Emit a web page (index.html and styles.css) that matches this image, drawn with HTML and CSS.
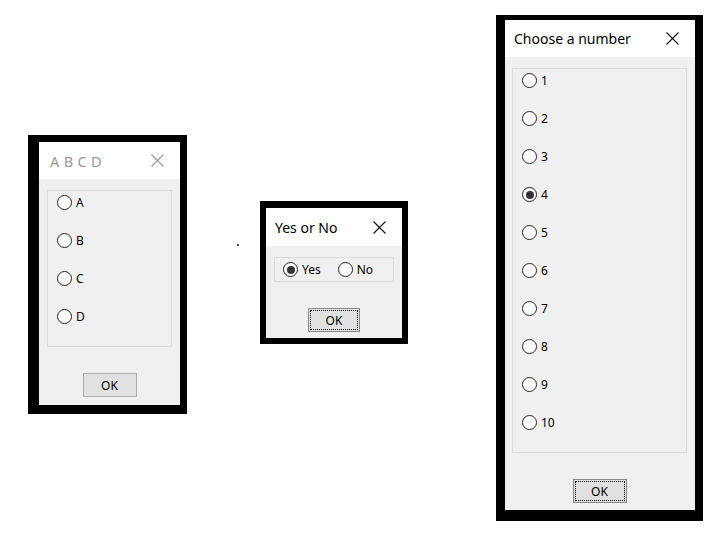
FILE: index.html
```html
<!DOCTYPE html>
<html>
<head>
  <meta charset="utf-8"/>
  <title>Radio Dialogs</title>
  <link rel="stylesheet" href="styles.css">
</head>
<body>
  <div class="desktop">

    <!-- inactive dialog -->
    <div class="frame frame-abcd">
      <div class="dialog">
        <div class="titlebar inactive">
          <span class="title spaced">A B C D</span>
          <svg class="close" width="13" height="13" viewBox="0 0 13 13"><path d="M0.5 0.5L12.5 12.5M12.5 0.5L0.5 12.5"/></svg>
        </div>
        <div class="body">
          <div class="group group-abcd">
            <div class="options">
              <label class="option"><span class="radio"></span>A</label>
              <label class="option"><span class="radio"></span>B</label>
              <label class="option"><span class="radio"></span>C</label>
              <label class="option"><span class="radio"></span>D</label>
            </div>
          </div>
          <div class="footer">
            <button class="ok">OK</button>
          </div>
        </div>
      </div>
    </div>

    <span class="speck"></span>

    <div class="frame frame-yesno">
      <div class="dialog">
        <div class="titlebar">
          <span class="title">Yes or No</span>
          <svg class="close" width="13" height="13" viewBox="0 0 13 13"><path d="M0.5 0.5L12.5 12.5M12.5 0.5L0.5 12.5"/></svg>
        </div>
        <div class="body">
          <div class="group group-yesno">
            <label class="option"><span class="radio checked"></span>Yes</label>
            <label class="option"><span class="radio"></span>No</label>
          </div>
          <div class="footer footer-yesno">
            <button class="ok focused">OK</button>
          </div>
        </div>
      </div>
    </div>

    <div class="frame frame-number">
      <div class="dialog">
        <div class="titlebar">
          <span class="title">Choose a number</span>
          <svg class="close" width="13" height="13" viewBox="0 0 13 13"><path d="M0.5 0.5L12.5 12.5M12.5 0.5L0.5 12.5"/></svg>
        </div>
        <div class="body">
          <div class="group group-number">
            <div class="options">
              <label class="option"><span class="radio"></span>1</label>
              <label class="option"><span class="radio"></span>2</label>
              <label class="option"><span class="radio"></span>3</label>
              <label class="option"><span class="radio checked"></span>4</label>
              <label class="option"><span class="radio"></span>5</label>
              <label class="option"><span class="radio"></span>6</label>
              <label class="option"><span class="radio"></span>7</label>
              <label class="option"><span class="radio"></span>8</label>
              <label class="option"><span class="radio"></span>9</label>
              <label class="option"><span class="radio"></span>10</label>
            </div>
          </div>
          <div class="footer footer-number">
            <button class="ok focused">OK</button>
          </div>
        </div>
      </div>
    </div>

  </div>
</body>
</html>
```

FILE: styles.css
```css
body {
  margin: 0;
  background: #fff;
  font-family: "Noto Sans", "Open Sans", sans-serif;
  color: #000;
}
.desktop {
  position: relative;
  width: 715px;
  height: 539px;
  overflow: hidden;
}

/* black outline around each window */
.frame {
  position: absolute;
  background: #000;
}
.frame-abcd {
  left: 28px;
  top: 135px;
  padding: 7px 7px 9px 11px;
}
.frame-yesno {
  left: 260px;
  top: 201px;
  padding: 7px 6px 6px 6px;
}
.frame-number {
  left: 496px;
  top: 15px;
  padding: 5px 8px 11px 9px;
}

.dialog {
  display: flex;
  flex-direction: column;
  background: #f0f0f0;
}
.frame-abcd .dialog { width: 141px; height: 263px; }
.frame-yesno .dialog { width: 136px; height: 130px; }
.frame-number .dialog { width: 190px; height: 490px; }

.titlebar {
  display: flex;
  align-items: center;
  justify-content: space-between;
  height: 37px;
  padding: 0 16px 0 9px;
  background: #fff;
  flex-shrink: 0;
}
.frame-yesno .titlebar { height: 38px; }
.title {
  font-size: 14px;
  color: #000;
}
.title.spaced {
  padding-left: 2px;
  font-size: 14.5px;
  letter-spacing: 0.3px;
}
.close path {
  fill: none;
  stroke: #111;
  stroke-width: 1.1;
}
.inactive .title { color: #999; }
.inactive .close path { stroke: #999; }

.body {
  flex: 1;
  display: flex;
  flex-direction: column;
  padding: 11px 8px 0 8px;
}
.frame-number .body { padding-left: 7px; padding-right: 8px; }

.group {
  border: 1px solid #dcdcdc;
  box-sizing: border-box;
}
.group-abcd { height: 157px; }
.group-number { height: 385px; }
.group-yesno {
  height: 25px;
  display: flex;
  align-items: center;
  gap: 17px;
  padding-left: 8px;
}

.options {
  display: flex;
  flex-direction: column;
  gap: 23px;
  padding: 4px 0 0 9px;
}

.option {
  display: flex;
  align-items: center;
  gap: 4px;
  height: 15px;
  font-size: 12px;
  line-height: 15px;
}

.radio {
  position: relative;
  width: 15px;
  height: 15px;
  border: 1px solid #222;
  border-radius: 50%;
  background: #fff;
  box-sizing: border-box;
}
.radio.checked::after {
  content: "";
  position: absolute;
  left: 2.5px;
  top: 2.5px;
  width: 8px;
  height: 8px;
  border-radius: 50%;
  background: #333;
}

.footer {
  display: flex;
  justify-content: center;
  padding-top: 26px;
}
.footer-yesno { padding-top: 26px; padding-left: 0; }
.footer-number { padding-top: 26px; padding-left: 0; }

.ok {
  width: 54px;
  height: 24px;
  padding: 0;
  font-family: inherit;
  font-size: 12px;
  color: #000;
  background: #e1e1e1;
  border: 1px solid #adadad;
}
.frame-yesno .ok { width: 52px; height: 24px; }
.ok.focused {
  outline: 1px dotted #000;
  outline-offset: -3px;
  border-color: #888;
}

.speck {
  position: absolute;
  left: 237px;
  top: 244px;
  width: 2px;
  height: 2px;
  background: #555;
}
```
